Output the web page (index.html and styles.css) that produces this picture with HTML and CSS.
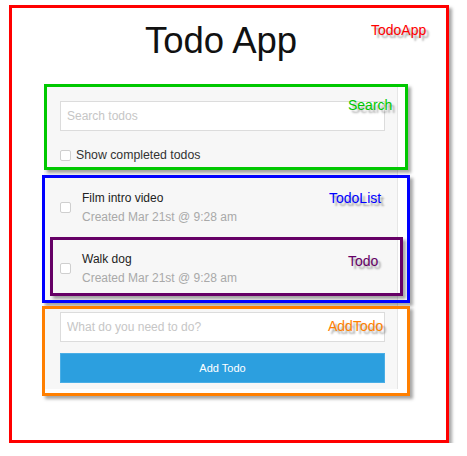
FILE: index.html
```html
<!DOCTYPE html>
<html>
<head>
<meta charset="utf-8">
<title>Todo App</title>
<link rel="stylesheet" href="styles.css">
</head>
<body>
<div class="todo-app">
  <span class="label label-red">TodoApp</span>
  <div class="app">
    <h1 class="title">Todo App</h1>
    <div class="panel">
      <section class="search">
        <input class="field" type="text" placeholder="Search todos">
        <label class="check-row">
          <input class="check" type="checkbox">
          <span>Show completed todos</span>
        </label>
        <span class="box box-green"></span>
        <span class="label label-green">Search</span>
      </section>
      <section class="todo-list">
        <div class="todo">
          <input class="check" type="checkbox">
          <div class="todo-text">
            <p class="todo-name">Film intro video</p>
            <p class="todo-meta">Created Mar 21st @ 9:28 am</p>
          </div>
        </div>
        <div class="todo todo-marked">
          <input class="check" type="checkbox">
          <div class="todo-text">
            <p class="todo-name">Walk dog</p>
            <p class="todo-meta">Created Mar 21st @ 9:28 am</p>
          </div>
          <span class="box box-purple"></span>
          <span class="label label-purple">Todo</span>
        </div>
        <span class="box box-blue"></span>
        <span class="label label-blue">TodoList</span>
      </section>
      <section class="add-todo">
        <input class="field" type="text" placeholder="What do you need to do?">
        <button class="add-btn" type="button">Add Todo</button>
        <span class="box box-orange"></span>
        <span class="label label-orange">AddTodo</span>
      </section>
    </div>
  </div>
</div>
</body>
</html>
```

FILE: styles.css
```css
* { box-sizing: border-box; }

html, body {
  margin: 0;
  padding: 0;
  background: #ffffff;
  font-family: "Liberation Sans", Arial, sans-serif;
}

.todo-app {
  position: relative;
  margin: 5px 0 0 9px;
  width: 440px;
  height: 438px;
  border: 3px solid #ff0000;
  box-shadow: 3px 3px 3px rgba(0, 0, 0, 0.35);
  padding-top: 12px;
}

.app {
  margin-left: 32px;
  width: 354px;
}

.title {
  margin: 0;
  font-size: 36.5px;
  line-height: 41px;
  font-weight: normal;
  color: #111111;
  text-align: center;
}

.panel {
  margin-top: 25px;
  background: #f7f7f7;
  border-right: 1px solid #e6e6e6;
}

.search {
  position: relative;
  padding: 15px 12px 14px 16px;
}

.field {
  display: block;
  width: 325px;
  height: 30px;
  margin: 0;
  padding: 0 6px;
  border: 1px solid #dcdcdc;
  border-radius: 0;
  background: #ffffff;
  font-family: "Liberation Sans", Arial, sans-serif;
  font-size: 12px;
  color: #333333;
  outline: none;
}

.field::placeholder {
  color: #c6c6c6;
}

.check-row {
  display: flex;
  align-items: center;
  gap: 5px;
  margin-top: 16px;
  height: 16px;
  font-size: 12.3px;
  color: #333333;
}

.check {
  appearance: none;
  -webkit-appearance: none;
  flex: none;
  margin: 0;
  width: 11px;
  height: 11px;
  border: 1px solid #cfcfcf;
  border-radius: 2px;
  background: #ffffff;
}

.todo-list {
  position: relative;
}

.todo {
  position: relative;
  display: flex;
  align-items: center;
  gap: 11px;
  padding: 12px 0 11px 16px;
}

.todo .check {
  margin-top: -1px;
}

.todo-text p {
  margin: 0;
  font-size: 12px;
  line-height: 19px;
}

.todo-name {
  color: #222222;
}

.todo-meta {
  color: #a9a9a9;
}

.add-todo {
  position: relative;
  padding: 13px 12px 6px 16px;
}

.add-btn {
  display: block;
  width: 325px;
  height: 30px;
  margin: 11px 0 0;
  padding: 0;
  border: 1px solid #4aaee6;
  background: #2c9fdf;
  color: #ffffff;
  font-family: "Liberation Sans", Arial, sans-serif;
  font-size: 11px;
}

/* annotation overlays */
.box {
  position: absolute;
  pointer-events: none;
  border: 3px solid;
  box-shadow: 3px 3px 3px rgba(0, 0, 0, 0.35);
}

.box-green { left: 0; top: -2px; width: 364px; height: 86px; border-color: #00c800; }
.box-blue { left: -2px; top: -2px; width: 368px; height: 128px; border-color: #0000ff; }
.box-purple { left: 6px; top: -1px; width: 353px; height: 59px; border-color: #660066; }
.box-orange { left: -2px; top: 7px; width: 368px; height: 90px; border-color: #ff7f00; }

.label {
  position: absolute;
  font-size: 14px;
  line-height: 14px;
  white-space: nowrap;
  text-shadow: 3px 3px 2px rgba(0, 0, 0, 0.35);
}

.label-red { left: 359px; top: 15px; color: #ff0000; }
.label-green { left: 304px; top: 12px; color: #00c800; }
.label-blue { left: 285px; top: 13.5px; color: #0000ff; }
.label-purple { left: 304px; top: 15.5px; color: #660066; }
.label-orange { left: 284px; top: 20px; color: #ff7f00; }
```
